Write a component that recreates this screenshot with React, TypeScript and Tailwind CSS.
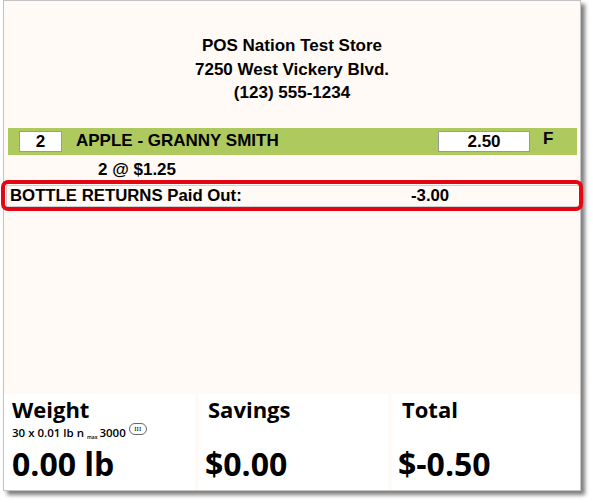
import React from "react";

export default function App() {
  return (
    <div className="w-[593px] h-[503px] bg-white overflow-hidden">
      <div className="ml-[3px] w-[578px] h-[491px] border border-[#c3c3c3] bg-[#fffaf5] shadow-[4px_4px_4px_rgba(0,0,0,0.5)] flex flex-col">
        <div className="pt-[33px] flex flex-col items-center font-['Liberation_Sans',Arial,sans-serif] font-bold text-[17px] leading-[23.5px] text-black">
          <div>POS Nation Test Store</div>
          <div>7250 West Vickery Blvd.</div>
          <div>(123) 555-1234</div>
        </div>

        <div className="mt-[23.5px] ml-[4px] mr-[3px] h-[27px] bg-[#aeca5e] flex items-center font-['Liberation_Sans',Arial,sans-serif] font-bold text-[17px] text-black">
          <div className="ml-[11px] w-[43px] h-[21px] bg-white border border-[#9a9a9a] flex items-center justify-center leading-none">2</div>
          <div className="ml-[14px] flex-1 leading-none -mt-[3px]">APPLE - GRANNY SMITH</div>
          <div className="w-[92px] h-[21px] bg-white border border-[#9a9a9a] flex items-center justify-center leading-none">2.50</div>
          <div className="ml-[13px] w-[34px] leading-none -mt-[6px]">F</div>
        </div>

        <div className="h-[26px] pl-[94px] flex items-center font-['Liberation_Sans',Arial,sans-serif] font-bold text-[17px] text-black pt-[3px]">
          2 @ $1.25
        </div>

        <div className="relative mt-[4px] ml-[2px] h-[22px] border border-[#d0d0d0] flex items-center font-['Liberation_Sans',Arial,sans-serif] font-bold text-[16.75px] text-black">
          <div className="pl-[3px] w-[404px]">BOTTLE RETURNS Paid Out:</div>
          <div>-3.00</div>
          <div className="absolute left-[-6px] right-[-4px] top-[-6px] bottom-[-5px] border-[4px] border-[#e30613] rounded-[7px]" />
        </div>

        <div className="flex-1" />

        <div className="h-[96px] flex gap-[4px] font-['Open_Sans',sans-serif] font-bold text-black">
          <div className="w-[191px] bg-white pl-[8px] flex flex-col">
            <div className="text-[22px] leading-[26px] mt-[2px]">Weight</div>
            <div className="h-[13px] flex items-end text-[11.5px] leading-[13px] font-semibold mt-[4px]">
              <span>30 x 0.01 lb n</span>
              <span className="text-[5px] leading-[6px] ml-[3px] relative top-[1px]">max</span>
              <span className="ml-[2px]">3000</span>
              <span className="ml-[3px] relative -top-[4px] w-[18px] h-[12px] rounded-full border border-[#666] text-[7px] leading-none font-normal flex items-center justify-center font-['Liberation_Serif',serif]">III</span>
            </div>
            <div className="text-[32px] leading-[38px] mt-[6px]">0.00 lb</div>
          </div>
          <div className="w-[189px] bg-white pl-[9px] flex flex-col">
            <div className="text-[22px] leading-[26px] mt-[2px]">Savings</div>
            <div className="text-[32px] leading-[38px] mt-[23px] -ml-[3px]">$0.00</div>
          </div>
          <div className="w-[188px] bg-white pl-[10px] flex flex-col">
            <div className="text-[22px] leading-[26px] mt-[2px]">Total</div>
            <div className="text-[32px] leading-[38px] mt-[23px] -ml-[4px]">$-0.50</div>
          </div>
        </div>
      </div>
    </div>
  );
}
